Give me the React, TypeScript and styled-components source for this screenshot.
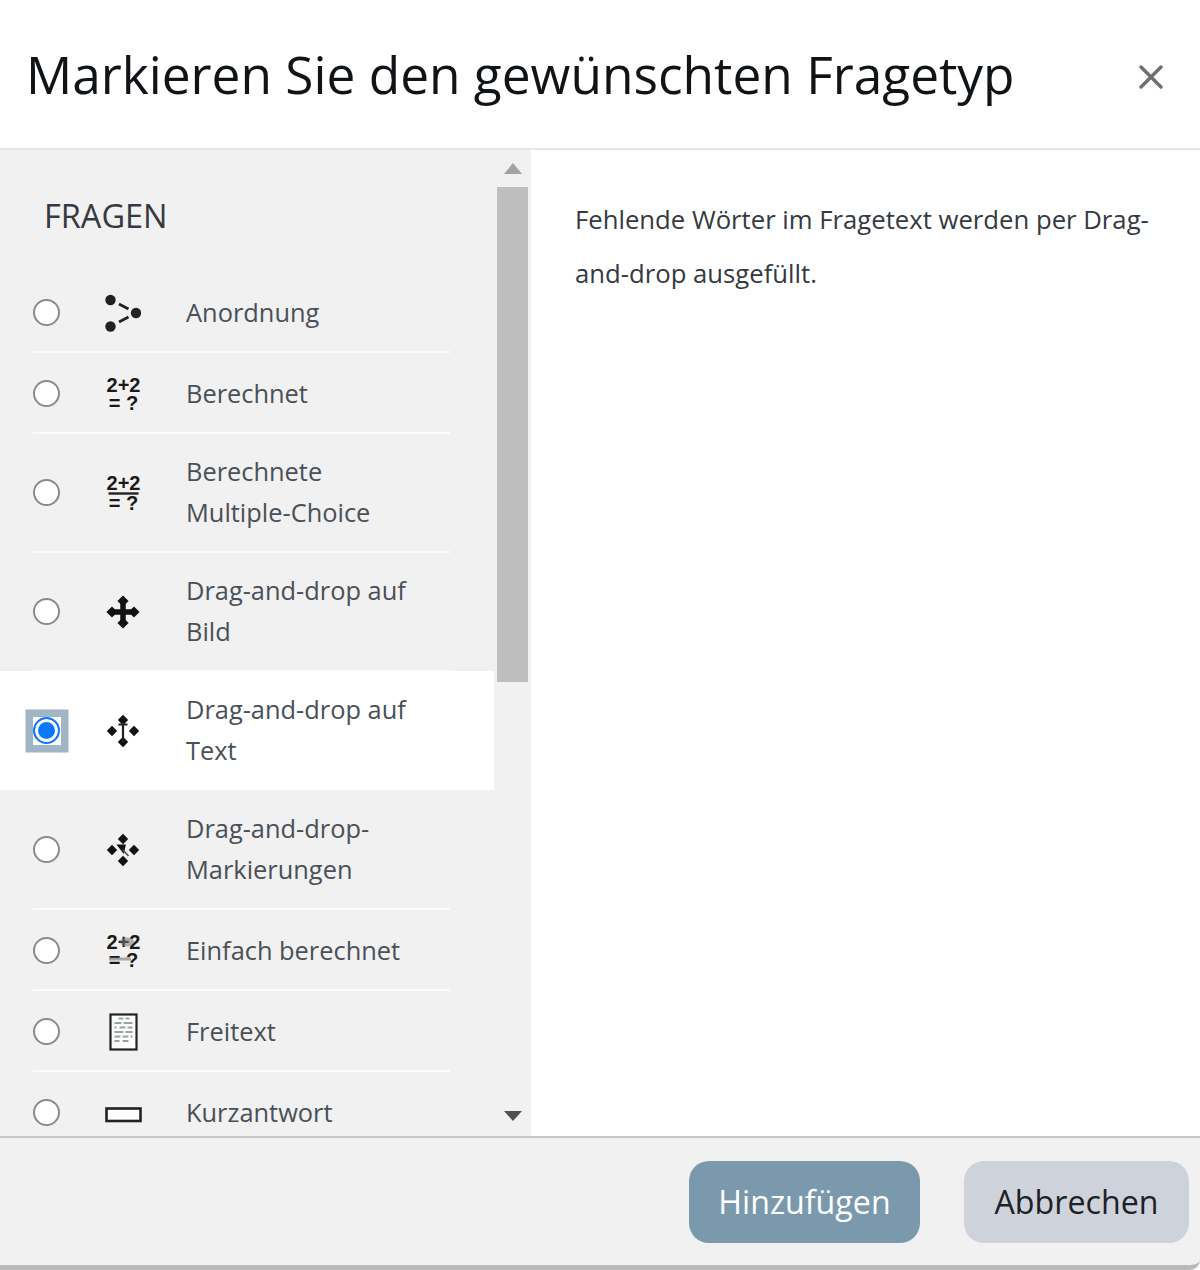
import React from "react";
import styled, { createGlobalStyle } from "styled-components";

const GlobalStyle = createGlobalStyle`
  html, body {
    margin: 0;
    padding: 0;
    background: #fff;
    font-family: "Open Sans", "Liberation Sans", sans-serif;
  }
  * { box-sizing: border-box; }
`;

const Diamond = ({ x, y, r = 5.2 }: { x: number; y: number; r?: number }) => (
  <path d={`M${x - r} ${y}L${x} ${y - r}L${x + r} ${y}L${x} ${y + r}Z`} fill="#111" />
);

const Compass = () => (
  <>
    <Diamond x={20} y={9} />
    <Diamond x={20} y={31} />
    <Diamond x={9} y={20} />
    <Diamond x={31} y={20} />
  </>
);

const Sum = ({ y1 = 18, y2 = 36 }: { y1?: number; y2?: number }) => (
  <IconText>
    <tspan x="20.5" y={y1}>2+2</tspan>
    <tspan x="20.5" y={y2}>= ?</tspan>
  </IconText>
);

const icons: Record<string, React.ReactNode> = {
  ordering: (
    <>
      <circle cx="7.5" cy="7" r="5.2" fill="#222" />
      <circle cx="7.5" cy="33.5" r="5.2" fill="#222" />
      <circle cx="33" cy="20" r="5.2" fill="#222" />
      <path d="M16 11l9.5 5M16 29l9.5-5" stroke="#222" strokeWidth="2.8" />
    </>
  ),
  calculated: <Sum />,
  calculatedmulti: (
    <>
      <Sum y1={16.5} y2={37} />
      <path d="M5.5 20.5h30" stroke="#222" strokeWidth="2.4" />
    </>
  ),
  ddimage: (
    <>
      <path d="M20 8v24M8 20h24" stroke="#111" strokeWidth="5.5" />
      <Diamond x={20} y={9} r={5.6} />
      <Diamond x={20} y={31} r={5.6} />
      <Diamond x={9} y={20} r={5.6} />
      <Diamond x={31} y={20} r={5.6} />
    </>
  ),
  ddwtos: (
    <>
      <Compass />
      <path d="M20 11v20M15.5 13.5h9" stroke="#222" strokeWidth="2.2" fill="none" />
    </>
  ),
  ddmarker: (
    <>
      <Compass />
      <path d="M16.5 16l4.5 0-1 4.5 z" fill="#111" stroke="#111" strokeWidth="3" />
      <path d="M20 20l5.5 6" stroke="#555" strokeWidth="1.8" />
    </>
  ),
  simple: (
    <>
      <Sum />
      <ellipse cx="24" cy="11" rx="7" ry="4.5" fill="#777" opacity="0.55" />
      <path d="M6 28l22 0" stroke="#888" strokeWidth="3" opacity="0.7" />
    </>
  ),
  essay: (
    <>
      <rect x="7.5" y="2.5" width="26" height="35" fill="#fff" stroke="#222" strokeWidth="2.2" />
      <path
        d="M15.5 6.5h5M22.5 6.5h4M11.5 11h7M20.5 11h9M11.5 15.5h2M16.5 15.5h6M24.5 15.5h5M11.5 20h9M22.5 20h7M11.5 24.5h6M19.5 24.5h6M27.5 24.5h2M11.5 29h5M19.5 29h6"
        stroke="#97a3a3"
        strokeWidth="1.8"
      />
    </>
  ),
  shortanswer: <rect x="3.5" y="15.5" width="34" height="12.5" fill="#fff" stroke="#222" strokeWidth="2.6" />,
};

const questions = [
  { id: "ordering", label: "Anordnung" },
  { id: "calculated", label: "Berechnet" },
  { id: "calculatedmulti", label: "Berechnete Multiple-Choice", tall: true },
  { id: "ddimage", label: "Drag-and-drop auf Bild", tall: true },
  { id: "ddwtos", label: "Drag-and-drop auf Text", tall: true, selected: true },
  { id: "ddmarker", label: "Drag-and-drop-Markierungen", tall: true },
  { id: "simple", label: "Einfach berechnet" },
  { id: "essay", label: "Freitext" },
  { id: "shortanswer", label: "Kurzantwort" },
];

export default function App() {
  return (
    <Dialog>
      <GlobalStyle />
      <Header>
        <Title>Markieren Sie den gewünschten Fragetyp</Title>
        <CloseIcon viewBox="0 0 24 24">
          <path d="M2 2l20 20M22 2L2 22" stroke="#6f6f6f" strokeWidth="3.4" strokeLinecap="round" />
        </CloseIcon>
      </Header>
      <Body>
        <Sidebar>
          <List>
            <Heading>FRAGEN</Heading>
            {questions.map((q) => (
              <Row key={q.id} $selected={q.selected} $tall={q.tall}>
                <RadioCell>
                  <RadioFrame $selected={q.selected}>
                    <Radio type="radio" name="qtype" defaultChecked={q.selected} />
                  </RadioFrame>
                </RadioCell>
                <Icon viewBox="0 0 40 40">{icons[q.id]}</Icon>
                <Label>{q.label}</Label>
              </Row>
            ))}
          </List>
          <Scrollbar>
            <ArrowUp />
            <Thumb />
            <Spacer />
            <ArrowDown />
          </Scrollbar>
        </Sidebar>
        <Summary>
          Fehlende Wörter im Fragetext werden per Drag-and-drop ausgefüllt.
        </Summary>
      </Body>
      <Footer>
        <PrimaryButton>Hinzufügen</PrimaryButton>
        <SecondaryButton>Abbrechen</SecondaryButton>
      </Footer>
    </Dialog>
  );
}

const Dialog = styled.div`
  width: 1200px;
  height: 1270px;
  display: flex;
  flex-direction: column;
  overflow: hidden;
  background: #fff;
`;

const Header = styled.div`
  height: 150px;
  flex: none;
  display: flex;
  align-items: center;
  justify-content: space-between;
  padding: 0 37px 0 26px;
  border-bottom: 2px solid #e3e6ea;
`;

const Title = styled.h1`
  margin: 0 0 1px;
  font-size: 51.4px;
  font-weight: 400;
  color: #111417;
  white-space: nowrap;
`;

const CloseIcon = styled.svg`
  width: 24px;
  height: 24px;
  margin-top: 6px;
`;

const Body = styled.div`
  flex: none;
  height: 986px;
  display: flex;
  overflow: hidden;
`;

const Sidebar = styled.div`
  width: 531px;
  flex: none;
  display: flex;
  background: #f1f1f1;
  overflow: hidden;
`;

const List = styled.div`
  width: 494px;
  flex: none;
`;

const Heading = styled.div`
  height: 121px;
  padding: 46px 0 0 44px;
  font-size: 32.5px;
  line-height: 40px;
  color: #343a40;
`;

const Row = styled.div<{ $selected?: boolean; $tall?: boolean }>`
  position: relative;
  display: flex;
  align-items: center;
  height: ${(p) => (p.$tall ? "119px" : "81px")};
  padding-top: ${(p) => (p.$tall ? "0" : "3px")};
  background: ${(p) => (p.$selected ? "#fff" : "transparent")};

  &::after {
    content: "";
    position: absolute;
    left: 33px;
    width: 417px;
    bottom: -1px;
    height: 2px;
    background: ${(p) => (p.$selected ? "transparent" : "#fbfbfb")};
  }
`;

const RadioCell = styled.div`
  width: 103px;
  flex: none;
  display: flex;
  padding-left: 33px;
`;

const RadioFrame = styled.span<{ $selected?: boolean }>`
  display: flex;
  width: 28px;
  height: 28px;
  background: ${(p) => (p.$selected ? "#fff" : "transparent")};
  box-shadow: ${(p) => (p.$selected ? "0 0 0 7.5px #a0b6c5" : "none")};
`;

const Radio = styled.input`
  appearance: none;
  margin: 0;
  width: 27px;
  height: 27px;
  border-radius: 50%;
  border: 2.5px solid #8a8a8a;
  background: #fff;

  &:checked {
    border-color: #1177ff;
    background: #0d78ff;
    box-shadow: inset 0 0 0 3px #fff;
  }
`;

const Icon = styled.svg`
  width: 40px;
  height: 40px;
  flex: none;
`;

const IconText = styled.text`
  font-family: "Liberation Sans", sans-serif;
  font-size: 20px;
  font-weight: 700;
  fill: #1a1a1a;
  text-anchor: middle;
`;

const Label = styled.div`
  margin: -1px 0 0 43px;
  width: 240px;
  font-size: 25.4px;
  line-height: 41px;
  color: #495057;
`;

const Scrollbar = styled.div`
  flex: 1;
  display: flex;
  flex-direction: column;
  align-items: center;
  padding: 13px 3px 15px 3px;
`;

const ArrowUp = styled.div`
  flex: none;
  width: 0;
  height: 0;
  border-left: 9px solid transparent;
  border-right: 9px solid transparent;
  border-bottom: 11px solid #a3a3a3;
  margin-bottom: 13px;
`;

const Thumb = styled.div`
  flex: none;
  width: 31px;
  height: 495px;
  background: #bebebe;
`;

const Spacer = styled.div`
  flex: 1;
`;

const ArrowDown = styled.div`
  flex: none;
  width: 0;
  height: 0;
  border-left: 9px solid transparent;
  border-right: 9px solid transparent;
  border-top: 10px solid #505050;
`;

const Summary = styled.div`
  flex: 1;
  padding: 43px 40px 0 44px;
  font-size: 25.7px;
  line-height: 54px;
  color: #343a40;
`;

const Footer = styled.div`
  flex: 1;
  display: flex;
  justify-content: flex-end;
  align-items: flex-start;
  gap: 44px;
  padding: 23px 11px 0 0;
  background: #f1f1f1;
  border-top: 2px solid #c8c8c8;
  border-bottom: 5px solid #b9b9b9;
  border-bottom-right-radius: 10px;
`;

const Button = styled.button`
  height: 82px;
  border: none;
  border-radius: 20px;
  font-family: inherit;
  font-size: 32.2px;
  padding: 0 0 2px;
`;

const PrimaryButton = styled(Button)`
  width: 231px;
  background: #7b99ac;
  color: #fff;
`;

const SecondaryButton = styled(Button)`
  width: 225px;
  background: #ced3db;
  color: #1d2125;
`;
